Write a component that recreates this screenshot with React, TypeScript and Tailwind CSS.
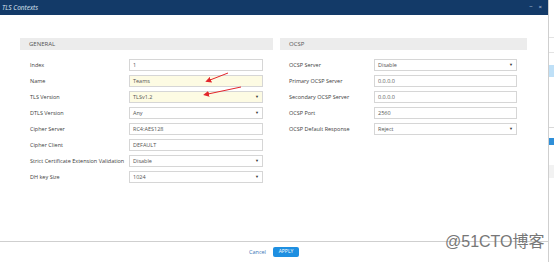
import { ReactNode } from "react";

type Row = { label: string; value: string; select?: boolean; hl?: boolean };

const general: Row[] = [
  { label: "Index", value: "1" },
  { label: "Name", value: "Teams", hl: true },
  { label: "TLS Version", value: "TLSv1.2", select: true, hl: true },
  { label: "DTLS Version", value: "Any", select: true },
  { label: "Cipher Server", value: "RC4:AES128" },
  { label: "Cipher Client", value: "DEFAULT" },
  { label: "Strict Certificate Extension Validation", value: "Disable", select: true },
  { label: "DH key Size", value: "1024", select: true },
];

const ocsp: Row[] = [
  { label: "OCSP Server", value: "Disable", select: true },
  { label: "Primary OCSP Server", value: "0.0.0.0" },
  { label: "Secondary OCSP Server", value: "0.0.0.0" },
  { label: "OCSP Port", value: "2560" },
  { label: "OCSP Default Response", value: "Reject", select: true },
];

function Field({ row, labelW, inputW }: { row: Row; labelW: string; inputW: string }) {
  return (
    <div className="flex items-center h-[12px]">
      <div className={`${labelW} shrink-0 text-[5.5px] text-[#404040] whitespace-nowrap`}>{row.label}</div>
      <div
        className={`${inputW} h-[12px] flex items-center justify-between px-[3px] border border-[#d6d6d6] text-[5.5px] text-[#555] ${
          row.hl ? "bg-[#fdfbe3]" : "bg-white"
        }`}
      >
        <span>{row.value}</span>
        {row.select && <span className="text-[4px] text-[#333]">▼</span>}
      </div>
    </div>
  );
}

function Section({ title, children }: { title: string; children: ReactNode }) {
  return (
    <div className="flex flex-col">
      <div className="h-[12px] bg-[#ececec] flex items-center px-[9px] text-[6px] text-[#555]">{title}</div>
      <div className="flex flex-col gap-[4px] pt-[9px]">{children}</div>
    </div>
  );
}

export default function App() {
  return (
    <div
      className="relative w-[554px] h-[262px] flex bg-white overflow-hidden"
      style={{ fontFamily: '"Open Sans", "Liberation Sans", sans-serif' }}
    >
      {/* Modal */}
      <div className="w-[549px] h-full flex flex-col border-r border-[#cfcfcf]">
        <div className="h-[15px] shrink-0 bg-[#133a68] flex items-center justify-between pl-[2px] pr-[6px]">
          <span className="text-[6.5px] italic text-[#dfe8f3]">TLS Contexts</span>
          <div className="flex items-center gap-[6px] text-[6px] text-[#c9d6e6]">
            <span>−</span>
            <span>×</span>
          </div>
        </div>

        <div className="flex-1 flex gap-[7px] pt-[23px] pl-[20px]">
          <div className="w-[253px]">
            <Section title="GENERAL">
              {general.map((r) => (
                <div key={r.label} className="pl-[10px]">
                  <Field row={r} labelW="w-[99px]" inputW="w-[134px]" />
                </div>
              ))}
            </Section>
          </div>
          <div className="w-[247px]">
            <Section title="OCSP">
              {ocsp.map((r) => (
                <div key={r.label} className="pl-[9px]">
                  <Field row={r} labelW="w-[85px]" inputW="w-[143px]" />
                </div>
              ))}
            </Section>
          </div>
        </div>

        <div className="h-[21px] shrink-0 border-t border-[#cfcfcf] flex items-center justify-center gap-[7px]">
          <span className="text-[5.5px] text-[#3a74b8]">Cancel</span>
          <span className="h-[10px] w-[26px] rounded-[2px] bg-[#1e8fe1] text-white text-[5px] flex items-center justify-center">
            APPLY
          </span>
        </div>
      </div>

      {/* Page behind the modal */}
      <div className="flex-1 flex flex-col">
        <div className="h-[37px]" />
        <div className="h-px bg-[#e3e3e3]" />
        <div className="h-[14px]" />
        <div className="h-px bg-[#e3e3e3]" />
        <div className="h-[12px]" />
        <div className="h-[12px] bg-[#bfe0f7]" />
        <div className="h-[50px]" />
        <div className="h-px bg-[#d9d9d9]" />
        <div className="h-[10px]" />
        <div className="h-[7px] bg-[#2f8fd8]" />
        <div className="h-[20px]" />
        <div className="h-[13px] bg-[#f2f2f2]" />
      </div>

      {/* Red arrows */}
      <svg className="absolute left-0 top-0 pointer-events-none" width="554" height="262">
        <defs>
          <marker id="ah" markerWidth="6" markerHeight="6" refX="1" refY="3" orient="auto-start-reverse">
            <path d="M0,0 L6,3 L0,6 z" fill="#e3262b" />
          </marker>
        </defs>
        <line x1="228" y1="73" x2="210" y2="80" stroke="#e3262b" strokeWidth="1" markerEnd="url(#ah)" />
        <line x1="241" y1="87" x2="208" y2="94" stroke="#e3262b" strokeWidth="1" markerEnd="url(#ah)" />
      </svg>

      {/* Watermark */}
      <div
        className="absolute left-[445px] top-[232px] text-[16px] leading-[20px] text-[#777]"
        style={{ fontFamily: '"Liberation Sans", "Noto Sans CJK SC", sans-serif' }}
      >
        @51CTO博客
      </div>
    </div>
  );
}
